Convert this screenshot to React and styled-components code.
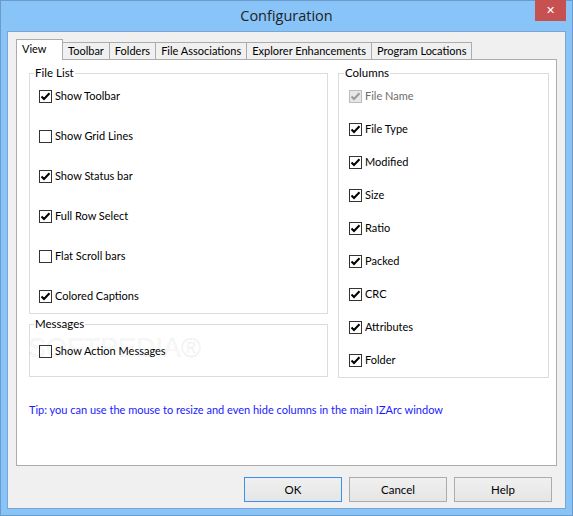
import React from 'react'
import styled, { createGlobalStyle } from 'styled-components'

const GlobalStyle = createGlobalStyle`
  html, body {
    margin: 0;
    padding: 0;
    background: #88c4f8;
  }
  body {
    font-family: Lato, "Open Sans", sans-serif;
    font-size: 11px;
    color: #000;
  }
`

const fileList = [
  { label: 'Show Toolbar', checked: true },
  { label: 'Show Grid Lines', checked: false },
  { label: 'Show Status bar', checked: true },
  { label: 'Full Row Select', checked: true },
  { label: 'Flat Scroll bars', checked: false },
  { label: 'Colored Captions', checked: true },
]

const columns = [
  { label: 'File Name', checked: true, disabled: true },
  { label: 'File Type', checked: true },
  { label: 'Modified', checked: true },
  { label: 'Size', checked: true },
  { label: 'Ratio', checked: true },
  { label: 'Packed', checked: true },
  { label: 'CRC', checked: true },
  { label: 'Attributes', checked: true },
  { label: 'Folder', checked: true },
]

const tabs = [
  'View',
  'Toolbar',
  'Folders',
  'File Associations',
  'Explorer Enhancements',
  'Program Locations',
]

const CheckBox = ({ checked, disabled, label }) => (
  <CheckRow $disabled={disabled}>
    <Box $disabled={disabled}>
      {checked && (
        <svg width="11" height="11" viewBox="0 0 11 11">
          <polyline
            points="1.5,5.5 4,8 9.5,2.2"
            fill="none"
            stroke={disabled ? '#9a9a9a' : '#000'}
            strokeWidth="2"
          />
        </svg>
      )}
    </Box>
    {label}
  </CheckRow>
)

const App = () => {
  return (
    <>
      <GlobalStyle />
      <Window>
        <TitleBar>
          <span />
          <Title>Configuration</Title>
          <CloseButton>✕</CloseButton>
        </TitleBar>
        <Client>
          <TabStrip>
            {tabs.map((t, i) => (
              <Tab key={t} $active={i === 0}>
                {t}
              </Tab>
            ))}
          </TabStrip>
          <Panel>
            <Groups>
              <LeftColumn>
                <Group $pad="7px 0 9px 5px" $gap="24px">
                  <Legend>File List</Legend>
                  {fileList.map((c) => (
                    <CheckBox key={c.label} {...c} />
                  ))}
                </Group>
                <Group $pad="11px 0 17px 5px">
                  <Legend>Messages</Legend>
                  <CheckBox label="Show Action Messages" checked={false} />
                </Group>
              </LeftColumn>
              <Group $pad="7px 0 9px 6px" $gap="17px">
                <Legend>Columns</Legend>
                {columns.map((c) => (
                  <CheckBox key={c.label} {...c} />
                ))}
              </Group>
            </Groups>
            <Tip>
              Tip: you can use the mouse to resize and even hide columns in the
              main IZArc window
            </Tip>
            <Watermark aria-hidden="true">SOFTPEDIA®</Watermark>
          </Panel>
          <ButtonRow>
            <Button $default>OK</Button>
            <Button>Cancel</Button>
            <Button>Help</Button>
          </ButtonRow>
        </Client>
      </Window>
    </>
  )
}

export default App

const Window = styled.div`
  width: 573px;
  height: 516px;
  box-sizing: border-box;
  border: 1px solid #6d9bc9;
  background: #88c4f8;
  display: flex;
  flex-direction: column;
  padding: 0 6px 6px;
`

const TitleBar = styled.div`
  height: 30px;
  display: grid;
  grid-template-columns: 1fr auto 1fr;
  align-items: start;
`

const Title = styled.div`
  font-family: "Open Sans", sans-serif;
  font-size: 14.5px;
  line-height: 20px;
  margin-top: 5px;
  color: #222;
`

const CloseButton = styled.div`
  justify-self: end;
  margin-top: -1px;
  width: 31px;
  height: 21px;
  background: #c75050;
  color: #fff;
  font-family: "DejaVu Sans", sans-serif;
  font-size: 11px;
  font-weight: bold;
  display: flex;
  align-items: center;
  justify-content: center;
`

const Client = styled.div`
  flex: 1;
  display: flex;
  flex-direction: column;
  border: 1px solid #7aa6d2;
  background: #f0f0f0;
  padding: 7px 8px 6px 8px;
`

const TabStrip = styled.div`
  display: flex;
  align-items: flex-end;
  height: 20px;
`

const Tab = styled.div`
  position: relative;
  box-sizing: border-box;
  border: 1px solid #acacac;
  border-bottom: none;
  line-height: 16px;
  padding: 0 5px;
  white-space: nowrap;
  background: ${(p) => (p.$active ? '#fff' : '#f0f0f0')};
  height: ${(p) => (p.$active ? '21px' : '17px')};
  margin-bottom: ${(p) => (p.$active ? '-1px' : '0')};
  z-index: ${(p) => (p.$active ? 2 : 1)};
  padding-top: ${(p) => (p.$active ? '1px' : '0')};
  min-width: ${(p) => (p.$active ? '47px' : '0')};
  & + & {
    margin-left: -1px;
  }
`

const Panel = styled.div`
  position: relative;
  flex: 1;
  border: 1px solid #acacac;
  background: #fff;
  padding: 5px 8px 0 12px;
  display: flex;
  flex-direction: column;
  overflow: hidden;
`

const Groups = styled.div`
  display: grid;
  grid-template-columns: 299px 211px;
  column-gap: 10px;
`

const LeftColumn = styled.div`
  display: flex;
  flex-direction: column;
  gap: 2px;
`

const Group = styled.fieldset`
  margin: 0;
  min-inline-size: 0;
  border: 1px solid #dcdcdc;
  padding: ${(p) => p.$pad};
  display: flex;
  flex-direction: column;
  gap: ${(p) => p.$gap || '0'};
`

const Legend = styled.legend`
  padding: 0 1px;
  margin-left: -1px;
  line-height: 16px;
  font-size: 11.5px;
`

const CheckRow = styled.label`
  display: flex;
  align-items: center;
  gap: 3px;
  height: 16px;
  line-height: 16px;
  margin-left: 4px;
  color: ${(p) => (p.$disabled ? '#6d6d6d' : '#000')};
`

const Box = styled.span`
  box-sizing: border-box;
  width: 13px;
  height: 13px;
  border: 1px solid ${(p) => (p.$disabled ? '#bcbcbc' : '#333')};
  background: ${(p) => (p.$disabled ? '#e6e6e6' : '#fff')};
  display: flex;
  align-items: center;
  justify-content: center;
  flex-shrink: 0;
`

const Tip = styled.div`
  margin-top: 24px;
  line-height: 16px;
  color: #1a1aff;
`

const Watermark = styled.div`
  position: absolute;
  left: 11px;
  top: 273px;
  font-family: "Liberation Sans", sans-serif;
  font-size: 27px;
  line-height: 30px;
  color: rgba(0, 0, 0, 0.03);
  -webkit-text-stroke: 1px rgba(0, 0, 0, 0.05);
  pointer-events: none;
  user-select: none;
`

const ButtonRow = styled.div`
  display: flex;
  justify-content: flex-end;
  gap: 7px;
  margin-top: 11px;
  padding-right: 5px;
  font-size: 11.5px;
`

const Button = styled.div`
  box-sizing: border-box;
  width: 98px;
  height: 25px;
  border: 1px solid ${(p) => (p.$default ? '#3c8ff0' : '#acacac')};
  background: linear-gradient(#f0f0f0, #e5e5e5);
  display: flex;
  align-items: center;
  justify-content: center;
`
